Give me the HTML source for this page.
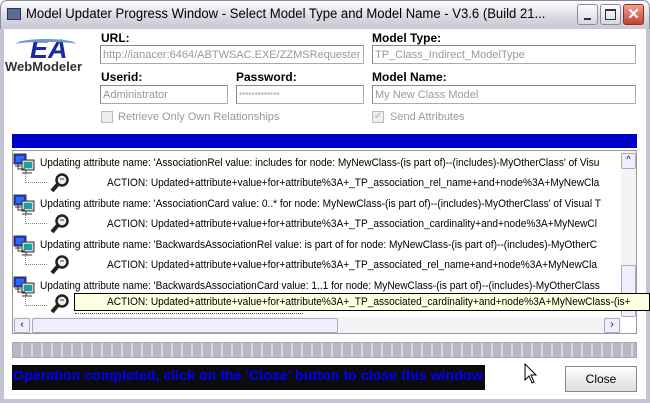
<!DOCTYPE html>
<html><head><meta charset="utf-8"><style>
*{margin:0;padding:0;box-sizing:border-box}
body{width:650px;height:403px;overflow:hidden;font-family:"Liberation Sans",sans-serif;background:#fff;position:relative}
.abs{position:absolute}
.title{left:0;top:0;width:650px;height:30px;background:linear-gradient(#fdfdfe,#d8d8e2 60%,#c8c8d4);border-radius:7px 7px 0 0;border:1px solid #8a8aa0}
.ttext{left:26px;top:6px;font-size:13.5px;color:#000;white-space:nowrap;transform:scaleX(0.97);transform-origin:left}
.btn{top:4px;width:21px;height:21px;border:1px solid #8a8aa0;border-radius:3px;background:linear-gradient(#fff,#d6d6e0)}
.frame{left:0;top:29px;width:650px;height:374px;border:4px solid #c4c4d2;border-top:none;background:#fff}
.lbl{font-size:12px;font-weight:bold;color:#000}
.inp{height:19px;border:1px solid #aaa;border-top-color:#888;border-left-color:#888;font-size:11px;color:#999;padding:3px 2px;white-space:nowrap;overflow:hidden;background:#fff}
.row{left:40px;font-size:11px;white-space:nowrap;color:#000;transform:scaleX(0.92);transform-origin:left}
.act{left:107px}
.dl{width:22px;height:9px;border-left:1px dotted #888;border-bottom:1px dotted #888}
</style></head><body>
<div class="abs title"></div>
<div class="abs" style="left:7px;top:8px;width:14px;height:12px;background:#5a6a9a;border:1px solid #334"></div>
<div class="abs ttext">Model Updater Progress Window - Select Model Type and Model Name - V3.6 (Build 21...</div>
<div class="abs btn" style="left:577px"><div class="abs" style="left:6px;top:13px;width:7px;height:2px;background:#333"></div></div>
<div class="abs btn" style="left:600px"><div class="abs" style="left:4px;top:4px;width:11px;height:11px;border:1px solid #333;border-top-width:2px"></div></div>
<div class="abs btn" style="left:623px;background:linear-gradient(#f0a090,#c0442c);border-color:#903020;color:#fff;font-size:15px;font-weight:bold;text-align:center;line-height:19px">✕</div>
<div class="abs frame"></div>
<div class="abs" style="left:8px;top:28px;width:80px;height:48px">
 <div class="abs" style="left:22px;top:6px;font-size:27px;font-weight:bold;font-style:italic;color:#1a2a9a;font-family:'Liberation Sans'">EA</div>
 <div class="abs" style="left:8px;top:11px;width:60px;height:10px;border-top:3px solid #6a9ad0;border-radius:50%"></div>
 <div class="abs" style="left:-3px;top:31px;font-size:13px;font-weight:bold;color:#333">WebModeler</div>
</div>
<div class="abs lbl" style="left:101px;top:31px">URL:</div>
<div class="abs inp" style="left:100px;top:45px;width:264px">http://ianacer:6464/ABTWSAC.EXE/ZZMSRequester</div>
<div class="abs lbl" style="left:372px;top:31px">Model Type:</div>
<div class="abs inp" style="left:372px;top:45px;width:264px">TP_Class_Indirect_ModelType</div>
<div class="abs lbl" style="left:101px;top:70px">Userid:</div>
<div class="abs inp" style="left:100px;top:85px;width:128px">Administrator</div>
<div class="abs lbl" style="left:236px;top:70px">Password:</div>
<div class="abs inp" style="left:236px;top:85px;width:128px;font-size:8px;padding-top:5px">*************</div>
<div class="abs lbl" style="left:372px;top:70px">Model Name:</div>
<div class="abs inp" style="left:372px;top:85px;width:264px">My New Class Model</div>
<div class="abs" style="left:101px;top:111px;width:12px;height:12px;border:1px solid #bbb;background:#eee"></div>
<div class="abs" style="left:118px;top:111px;font-size:11px;color:#999">Retrieve Only Own Relationships</div>
<div class="abs" style="left:372px;top:111px;width:12px;height:12px;border:1px solid #bbb;background:#eee;font-size:10px;color:#aaa;line-height:10px;text-align:center">✓</div>
<div class="abs" style="left:390px;top:111px;font-size:11px;color:#999">Send Attributes</div>
<div class="abs" style="left:12px;top:134px;width:625px;height:14px;background:#0000c8"></div>
<div class="abs" style="left:12px;top:150px;width:625px;height:184px;border:1px solid #999;background:#fff"></div>
<div class="abs" style="left:621px;top:151px;width:15px;height:166px;background:#f4f4f6"></div>
<div class="abs" style="left:621px;top:153px;width:15px;height:16px;border:1px solid #aab;border-radius:2px;background:#eef;font-size:9px;text-align:center">^</div>
<div class="abs" style="left:621px;top:265px;width:15px;height:52px;border:1px solid #aab;border-radius:2px;background:#eef"></div>
<div class="abs" style="left:13px;top:317px;width:608px;height:16px;background:#f4f4f6"></div>
<div class="abs" style="left:14px;top:318px;width:16px;height:15px;border:1px solid #aab;border-radius:2px;background:#eef;font-size:10px;text-align:center">‹</div>
<div class="abs" style="left:32px;top:318px;width:306px;height:15px;border:1px solid #aab;border-radius:2px;background:#eef"></div>
<div class="abs" style="left:604px;top:318px;width:16px;height:15px;border:1px solid #aab;border-radius:2px;background:#eef;font-size:10px;text-align:center">›</div>

<svg width="0" height="0" style="position:absolute"><defs>
<g id="pc"><rect x="1" y="1" width="12" height="10" fill="#1a3cc8" stroke="#333"/><rect x="3" y="3" width="8" height="6" fill="#2a6aff"/><rect x="9" y="7" width="12" height="10" fill="#d0d0d0" stroke="#333"/><rect x="11" y="9" width="8" height="6" fill="#18a0a8"/><path d="M2 13 H8 M5 11 V16 H12 M13 17 V20 M9 20 H19" stroke="#333" fill="none"/></g>
<g id="mg"><circle cx="12" cy="7" r="5.5" fill="#eee" stroke="#222" stroke-width="2.5"/><path d="M8 11 L2 18" stroke="#222" stroke-width="4"/><path d="M10 6 H14" stroke="#444"/></g>
</defs></svg>

<svg class="abs" style="left:13px;top:153px" width="24" height="22"><use href="#pc"/></svg>
<div class="abs row" style="top:157px">Updating attribute name: 'AssociationRel value: includes for node: MyNewClass-(is part of)--(includes)-MyOtherClass' of Visu</div>
<div class="abs dl" style="left:25px;top:174px"></div>
<svg class="abs" style="left:50px;top:173px" width="22" height="22"><use href="#mg"/></svg>
<div class="abs row act" style="top:177px">ACTION: Updated+attribute+value+for+attribute%3A+_TP_association_rel_name+and+node%3A+MyNewCla</div>
<svg class="abs" style="left:13px;top:194px" width="24" height="22"><use href="#pc"/></svg>
<div class="abs row" style="top:198px">Updating attribute name: 'AssociationCard value: 0..* for node: MyNewClass-(is part of)--(includes)-MyOtherClass' of Visual T</div>
<div class="abs dl" style="left:25px;top:215px"></div>
<svg class="abs" style="left:50px;top:214px" width="22" height="22"><use href="#mg"/></svg>
<div class="abs row act" style="top:218px">ACTION: Updated+attribute+value+for+attribute%3A+_TP_association_cardinality+and+node%3A+MyNewCl</div>
<svg class="abs" style="left:13px;top:235px" width="24" height="22"><use href="#pc"/></svg>
<div class="abs row" style="top:239px">Updating attribute name: 'BackwardsAssociationRel value: is part of for node: MyNewClass-(is part of)--(includes)-MyOtherC</div>
<div class="abs dl" style="left:25px;top:256px"></div>
<svg class="abs" style="left:50px;top:255px" width="22" height="22"><use href="#mg"/></svg>
<div class="abs row act" style="top:259px">ACTION: Updated+attribute+value+for+attribute%3A+_TP_associated_rel_name+and+node%3A+MyNewCla</div>
<svg class="abs" style="left:13px;top:276px" width="24" height="22"><use href="#pc"/></svg>
<div class="abs row" style="top:280px">Updating attribute name: 'BackwardsAssociationCard value: 1..1 for node: MyNewClass-(is part of)--(includes)-MyOtherClass</div>
<div class="abs dl" style="left:25px;top:297px"></div>
<svg class="abs" style="left:50px;top:294px" width="22" height="22"><use href="#mg"/></svg>
<div class="abs" style="left:74px;top:293px;width:576px;height:18px;background:#ffffe1;border:1px solid #000"></div>
<div class="abs row act" style="top:296px">ACTION: Updated+attribute+value+for+attribute%3A+_TP_associated_cardinality+and+node%3A+MyNewClass-(is+</div>
<div class="abs" style="left:75px;top:313px;width:228px;border-top:1px dotted #444"></div>

<div class="abs" style="left:12px;top:342px;width:625px;height:16px;border:1px solid #aaa;background:repeating-linear-gradient(90deg,#b8b8c4 0 8px,#d8d8e0 8px 10px)"></div>
<div class="abs" style="left:12px;top:365px;width:473px;height:25px;background:#0c0c10"></div>
<div class="abs" style="left:13px;top:368px;color:#0000ff;font-size:13.5px;font-weight:bold;white-space:nowrap;transform:scaleX(1.055);transform-origin:left">Operation completed, click on the 'Close' button to close this window</div>
<div class="abs" style="left:565px;top:366px;width:72px;height:26px;border:1px solid #888;background:linear-gradient(#fff,#ddd);font-size:12px;text-align:center;line-height:24px">Close</div>
<svg class="abs" style="left:524px;top:363px" width="14" height="22"><path d="M1 1 L1 17 L5 13 L8 20 L10 19 L7 12 L12 12 Z" fill="#fff" stroke="#000"/></svg>
</body></html>
